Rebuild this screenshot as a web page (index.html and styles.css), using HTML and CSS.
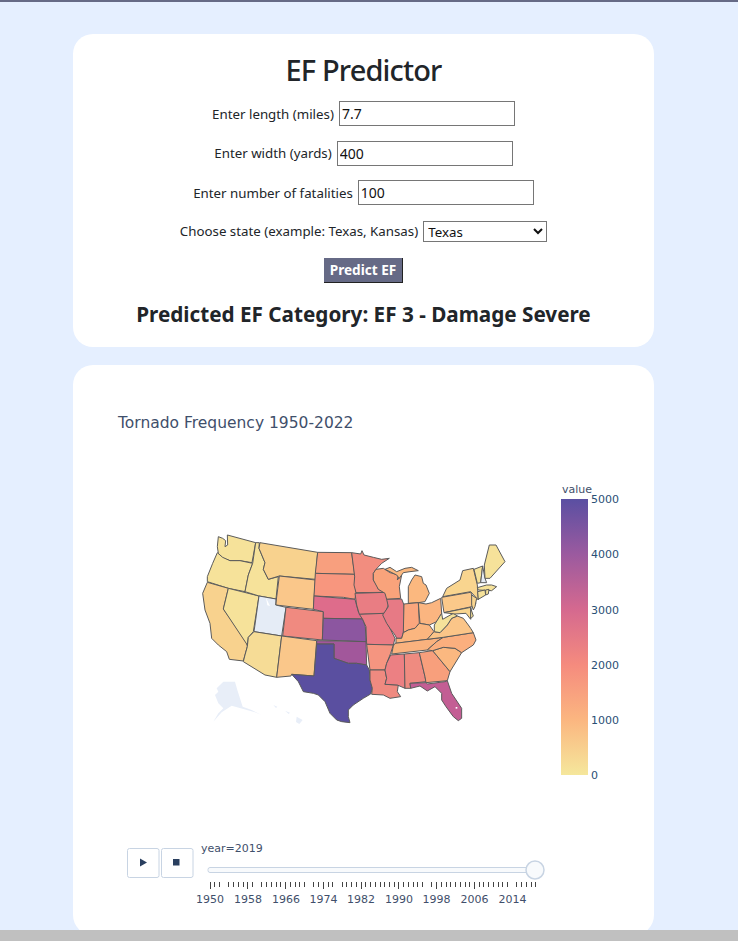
FILE: index.html
```html
<!DOCTYPE html>
<html lang="en">
<head>
<meta charset="utf-8">
<title>EF Predictor</title>
<link rel="stylesheet" href="styles.css">
</head>
<body>
<main class="page">
  <section class="card form-card">
    <h1 class="title">EF Predictor</h1>
    <form class="form">
      <div class="row"><label>Enter length (miles)</label><input class="field" type="text" value="7.7"></div>
      <div class="row"><label>Enter width (yards)</label><input class="field" type="text" value="400"></div>
      <div class="row"><label>Enter number of fatalities</label><input class="field" type="text" value="100"></div>
      <div class="row row-select"><label>Choose state (example: Texas, Kansas)</label><select class="choice"><option>Texas</option></select></div>
      <button class="submit" type="button">Predict EF</button>
    </form>
    <h2 class="result">Predicted EF Category: EF 3 - Damage Severe</h2>
  </section>
  <section class="card chart-card">
    <svg class="chart" viewBox="73 365 581 570" width="581" height="570">
      <defs>
        <linearGradient id="scale" x1="0" y1="0" x2="0" y2="1">
          <stop offset="0" stop-color="#5a4fa2"/>
          <stop offset=".2" stop-color="#9b5a9f"/>
          <stop offset=".4" stop-color="#d5698f"/>
          <stop offset=".6" stop-color="#f58b7e"/>
          <stop offset=".8" stop-color="#fbb680"/>
          <stop offset="1" stop-color="#f5e79c"/>
        </linearGradient>
      </defs>
      <text class="chart-title" x="118" y="428">Tornado Frequency 1950-2022</text>

      <g class="ghost" transform="translate(190 520) scale(.3333)">
        <path d="M100 485L135 485L142 510L158 560L185 570L215 585L195 577L160 567L125 557L95 577L70 605L85 580L100 565L85 550L75 525L85 515L80 505Z"/>
        <path d="M320 590L338 600L328 612L318 606Z"/>
        <path d="M250 555L262 560L258 564ZM285 572L300 578L296 582Z"/>
      </g>

      <g class="states" transform="translate(190 520) scale(.3333)">
        <path fill="#f6e29a" d="M85 50L98 55L107 62L105 80L113 75L112 45L197 68L186 128L150 122L120 122L100 115L85 100L82 80Z"/>
        <path fill="#f6e29a" d="M82 98L98 112L120 122L150 122L188 130L175 165L165 215L115 205L52 185L52 170L68 130Z"/>
        <path fill="#f8d28e" d="M52 187L115 205L100 267L170 365L172 380L165 405L160 423L118 418L110 395L85 375L65 355L60 310L45 270L38 220Z"/>
        <path fill="#f6e29a" d="M115 205L207 228L190 335L175 352L172 375L100 267Z"/>
        <path fill="#f6e29a" d="M197 68L208 68L207 85L225 128L220 148L235 178L265 170L258 237L207 228L165 215L175 165L188 130Z"/>
        <path fill="#f8d28e" d="M210 68L383 97L376 178L268 168L235 178L220 148L225 128L207 85Z"/>
        <path fill="#fac78a" d="M268 168L376 180L370 268L257 255Z"/>
        <path fill="#e5ecf6" d="M207 228L258 237L257 255L288 262L275 348L192 335Z"/>
        <path class="lake" d="M228 233L240 258L232 256Z"/>
        <path fill="#f08a80" d="M288 262L400 275L397 360L278 348Z"/>
        <path fill="#f6dc96" d="M192 335L275 348L260 472L225 465L160 425L165 405L172 380L175 352Z"/>
        <path fill="#fac78a" d="M275 348L380 362L372 468L305 463L303 468L260 472Z"/>
      </g>

      <g class="states" transform="translate(340 530) scale(.3333)">
        <path fill="#f89f7e" d="M-67 67L35 68L44 133L-74 130Z"/>
        <path fill="#f8967e" d="M-74 130L44 133L48 188L45 208L10 202L-78 198Z"/>
        <path fill="#de6c8b" d="M-78 198L45 208L55 245L68 267L-50 265L-50 245L-80 238Z"/>
        <path fill="#8c56a0" d="M-50 265L68 267L76 290L78 335L-53 330Z"/>
        <path fill="#a2579b" d="M-70 332L78 335L80 405L50 400L25 400L-18 385L-18 342L-70 342Z"/>
        <path fill="#5a4fa0" d="M-70 342L-18 342L-18 385L25 400L50 400L80 405L88 420L90 450L97 475L92 492L70 505L40 525L25 540L25 560L30 578L5 575L-10 570L-30 550L-45 515L-65 495L-80 490L-110 485L-125 455L-145 433L-78 438Z"/>
        <path fill="#f28d7f" d="M35 68L62 72L66 62L72 75L100 82L125 88L148 85L125 100L108 118L100 130L100 150L112 168L115 178L140 187L48 188L42 165L44 140Z"/>
        <path fill="#e97d83" d="M45 190L140 187L143 205L145 225L135 250L58 253L50 225Z"/>
        <path fill="#ea7c85" d="M58 253L135 250L145 285L165 325L160 345L80 343L78 290L68 268Z"/>
        <path fill="#f59580" d="M80 343L160 345L152 370L140 400L135 420L90 420L88 405Z"/>
        <path fill="#ef8a80" d="M90 420L135 420L140 445L135 463L175 465L172 485L182 500L150 505L130 495L95 493L97 475L90 450Z"/>
        <path fill="#f9a37b" d="M100 150L100 130L108 118L130 115L150 128L175 135L172 150L185 135L178 170L182 205L140 208L135 190L115 178Z"/>
        <path fill="#fbb87f" d="M135 118L150 112L170 125L195 115L215 112L235 122L210 125L190 128L178 145L170 135L150 125Z"/>
        <path fill="#fbb87f" d="M205 220L205 170L215 150L225 135L245 140L250 160L258 165L268 190L255 215L235 218Z"/>
        <path fill="#e77a85" d="M140 208L185 207L192 225L192 300L185 325L170 325L165 315L150 295L140 280L128 255L145 230Z"/>
        <path fill="#fba67d" d="M192 222L235 218L238 280L225 295L205 300L190 308Z"/>
        <path fill="#fbb580" d="M235 218L258 222L275 218L302 205L305 250L290 275L268 285L240 280Z"/>
        <path fill="#fbb67f" d="M168 325L185 325L190 308L205 300L225 295L238 280L268 285L282 305L262 328L168 340Z"/>
        <path fill="#fab27e" d="M165 340L262 328L310 322L290 335L262 360L155 372L160 348Z"/>
        <path fill="#ec8083" d="M152 375L193 372L195 445L195 475L172 465L135 463L140 445L135 420L140 400Z"/>
        <path fill="#ef8b80" d="M193 372L238 368L255 440L258 455L210 460L212 475L195 475Z"/>
        <path fill="#f89f7c" d="M238 368L278 362L330 425L322 452L258 458L255 440Z"/>
        <path fill="#c35e94" d="M210 460L258 458L262 462L315 455L322 452L335 490L365 535L365 565L355 572L340 560L318 530L305 510L305 490L285 470L262 483L240 468L212 475Z"/>
        <path class="lake" d="M347 531h5v5h-5z"/>
        <path fill="#fbb880" d="M278 362L310 352L345 355L365 368L330 425Z"/>
        <path fill="#fbaf7e" d="M262 360L290 335L310 322L400 308L408 330L400 345L365 368L345 355L310 352L278 362Z"/>
        <path fill="#fbc588" d="M262 328L282 305L300 308L322 285L335 265L352 258L370 265L385 285L392 295L400 308L310 322Z"/>
        <path fill="#f5e19a" d="M283 305L283 285L305 250L308 268L340 250L352 258L335 265L322 285L300 308Z"/>
        <path fill="#f9d58f" d="M308 200L320 175L360 150L368 122L400 115L412 165L415 210L392 185Z"/>
        <path fill="#fbc98a" d="M305 202L392 187L408 220L395 230L312 248Z"/>
        <path fill="#f9d58f" d="M312 248L393 232L392 268L378 250L345 252Z"/>
        <path fill="#f6e29a" d="M392 234L400 258L392 266Z"/>
        <path fill="#f9d58f" d="M395 195L410 205L405 230L400 240L395 225Z"/>
        <path fill="#f6e29a" d="M402 118L428 108L422 158L412 160Z"/>
        <path fill="#e5ecf6" d="M428 108L435 145L440 158L422 158Z"/>
        <path fill="#f6e29a" d="M433 105L448 45L468 45L495 95L450 145L435 145Z"/>
        <path fill="#f6e29a" d="M412 173L440 165L455 165L470 170L455 182L415 180Z"/>
        <path fill="#f6e29a" d="M413 185L435 180L437 195L415 208Z"/>
        <path fill="#f6e29a" d="M437 180L447 178L445 192L437 195Z"/>
      </g>

      <text class="axis" x="562" y="493">value</text>
      <rect class="bar" x="561" y="499" width="27" height="276" fill="url(#scale)"/>
      <g class="axis-blue">
        <text x="591" y="503">5000</text>
        <text x="591" y="558">4000</text>
        <text x="591" y="614">3000</text>
        <text x="591" y="669">2000</text>
        <text x="591" y="724">1000</text>
        <text x="591" y="779">0</text>
      </g>

      <rect class="btn" x="127.5" y="848.5" width="31.5" height="29" rx="2"/>
      <rect class="btn" x="161.5" y="848.5" width="31.5" height="29" rx="2"/>
      <path class="glyph" d="M140 858.500L147 862.500L140 866.500Z"/>
      <rect class="glyph" x="173" y="859" width="6.500" height="6.500"/>

      <text class="axis" x="201" y="852">year=2019</text>
      <rect class="rail" x="208" y="867.500" width="330" height="5" rx="2"/>
      <circle class="knob" cx="535" cy="870" r="9"/>
      <path class="ticks" d="M210 882v7M214.700 882v5M219.400 882v5M228.900 882v5M233.600 882v5M238.300 882v5M243 882v5M247.800 882v7M252.500 882v5M261.900 882v5M266.600 882v5M271.300 882v5M276 882v5M280.800 882v5M285.500 882v7M290.200 882v5M295 882v5M299.700 882v5M304.400 882v5M313.800 882v5M318.500 882v5M323.300 882v7M328 882v5M332.700 882v5M342.100 882v5M346.900 882v5M351.600 882v5M356.300 882v5M361 882v7M365.800 882v5M370.500 882v5M375.200 882v5M380 882v5M384.700 882v5M389.400 882v5M394 882v5M398.800 882v7M403.500 882v5M408.300 882v5M413 882v5M417.700 882v5M422.400 882v5M431.900 882v5M436.600 882v7M441.300 882v5M446 882v5M450.800 882v5M455.500 882v5M460.200 882v5M465 882v5M469.700 882v5M474.400 882v7M479.100 882v5M483.800 882v5M488.600 882v5M493.300 882v5M498 882v5M502.700 882v5M507.500 882v5M516 882v5M521.600 882v5M526.400 882v5M531.100 882v5M535.800 882v5"/>
      <g class="axis" text-anchor="middle">
        <text x="210" y="903">1950</text>
        <text x="248" y="903">1958</text>
        <text x="286" y="903">1966</text>
        <text x="323.500" y="903">1974</text>
        <text x="361" y="903">1982</text>
        <text x="399" y="903">1990</text>
        <text x="436.500" y="903">1998</text>
        <text x="474.500" y="903">2006</text>
        <text x="512.500" y="903">2014</text>
      </g>
    </svg>
  </section>
</main>
<div class="bottom-bar"></div>
</body>
</html>
```
FILE: styles.css
```css
html, body {
  margin: 0;
  height: 941px;
  overflow: hidden;
}
body {
  background: #e5efff;
  border-top: 2px solid #666a86;
  box-sizing: border-box;
  font-family: "Noto Sans", "Open Sans", sans-serif;
  color: #212529;
}
.page {
  width: 581px;
  margin: 32px 0 0 73px;
  display: flex;
  flex-direction: column;
  gap: 18px;
}
.card {
  background: #fff;
  border-radius: 20px;
}
.form-card {
  height: 313px;
  box-sizing: border-box;
  padding-top: 16px;
  text-align: center;
}
.title {
  margin: 0;
  font-size: 29px;
  letter-spacing: -.85px;
  line-height: 40px;
  font-weight: 500;
}
.form {
  display: flex;
  flex-direction: column;
  align-items: center;
  margin-top: 11px;
}
.row {
  display: flex;
  align-items: center;
  gap: 5px;
  height: 25px;
  margin-bottom: 14.500px;
  font-size: 13.300px;
}
.row-select {
  margin-top: -1px;
  margin-bottom: 14px;
}
.field {
  width: 176px;
  height: 25px;
  box-sizing: border-box;
  border: 1px solid #767676;
  padding: 1px 2px;
  font: 14px "Noto Sans", sans-serif;
  color: #111;
  background: #fff;
  border-radius: 0;
  outline: none;
}
.choice {
  width: 124px;
  height: 21px;
  box-sizing: border-box;
  border: 1px solid #767676;
  font: 13.300px "Noto Sans", sans-serif;
  color: #111;
  background: #fff;
  border-radius: 0;
}
.submit {
  width: 79px;
  height: 25px;
  box-sizing: border-box;
  border: 0;
  border-bottom: 1px solid #222;
  border-right: 1px solid #222;
  background: #666a86;
  color: #fff;
  font: 700 13.600px "Noto Sans", sans-serif;
  padding: 0;
}
.result {
  margin: 16px 0 0;
  font-size: 20.700px;
  line-height: 30px;
  font-weight: 700;
}
.chart-card {
  height: 570px;
  overflow: hidden;
}
.chart {
  display: block;
}
.chart-title {
  font: 15.500px "DejaVu Sans", sans-serif;
  fill: #3f4f6b;
}
.axis, .axis text {
  font: 11px "DejaVu Sans", sans-serif;
  fill: #3f4f6b;
}
.axis-blue text {
  font: 11px "DejaVu Sans", sans-serif;
  fill: #2a4f75;
}
.ghost {
  fill: #e8eef8;
}
.states path {
  stroke: #5a5a5a;
  stroke-width: 3;
  stroke-linejoin: round;
}
.states .lake {
  fill: #fff;
  stroke: none;
}
.btn {
  fill: #fff;
  stroke: #c8d4e3;
}
.glyph {
  fill: #2a3f5f;
}
.rail {
  fill: #f8fafc;
  stroke: #c8d4e3;
}
.knob {
  fill: #f8fafc;
  stroke: #c8d4e3;
  stroke-width: 1.500;
}
.ticks {
  stroke: #444;
  stroke-width: 1;
  shape-rendering: crispEdges;
  fill: none;
}
.bottom-bar {
  position: fixed;
  left: 0;
  right: 0;
  bottom: 0;
  height: 11px;
  background: #c0c0c0;
}
```
